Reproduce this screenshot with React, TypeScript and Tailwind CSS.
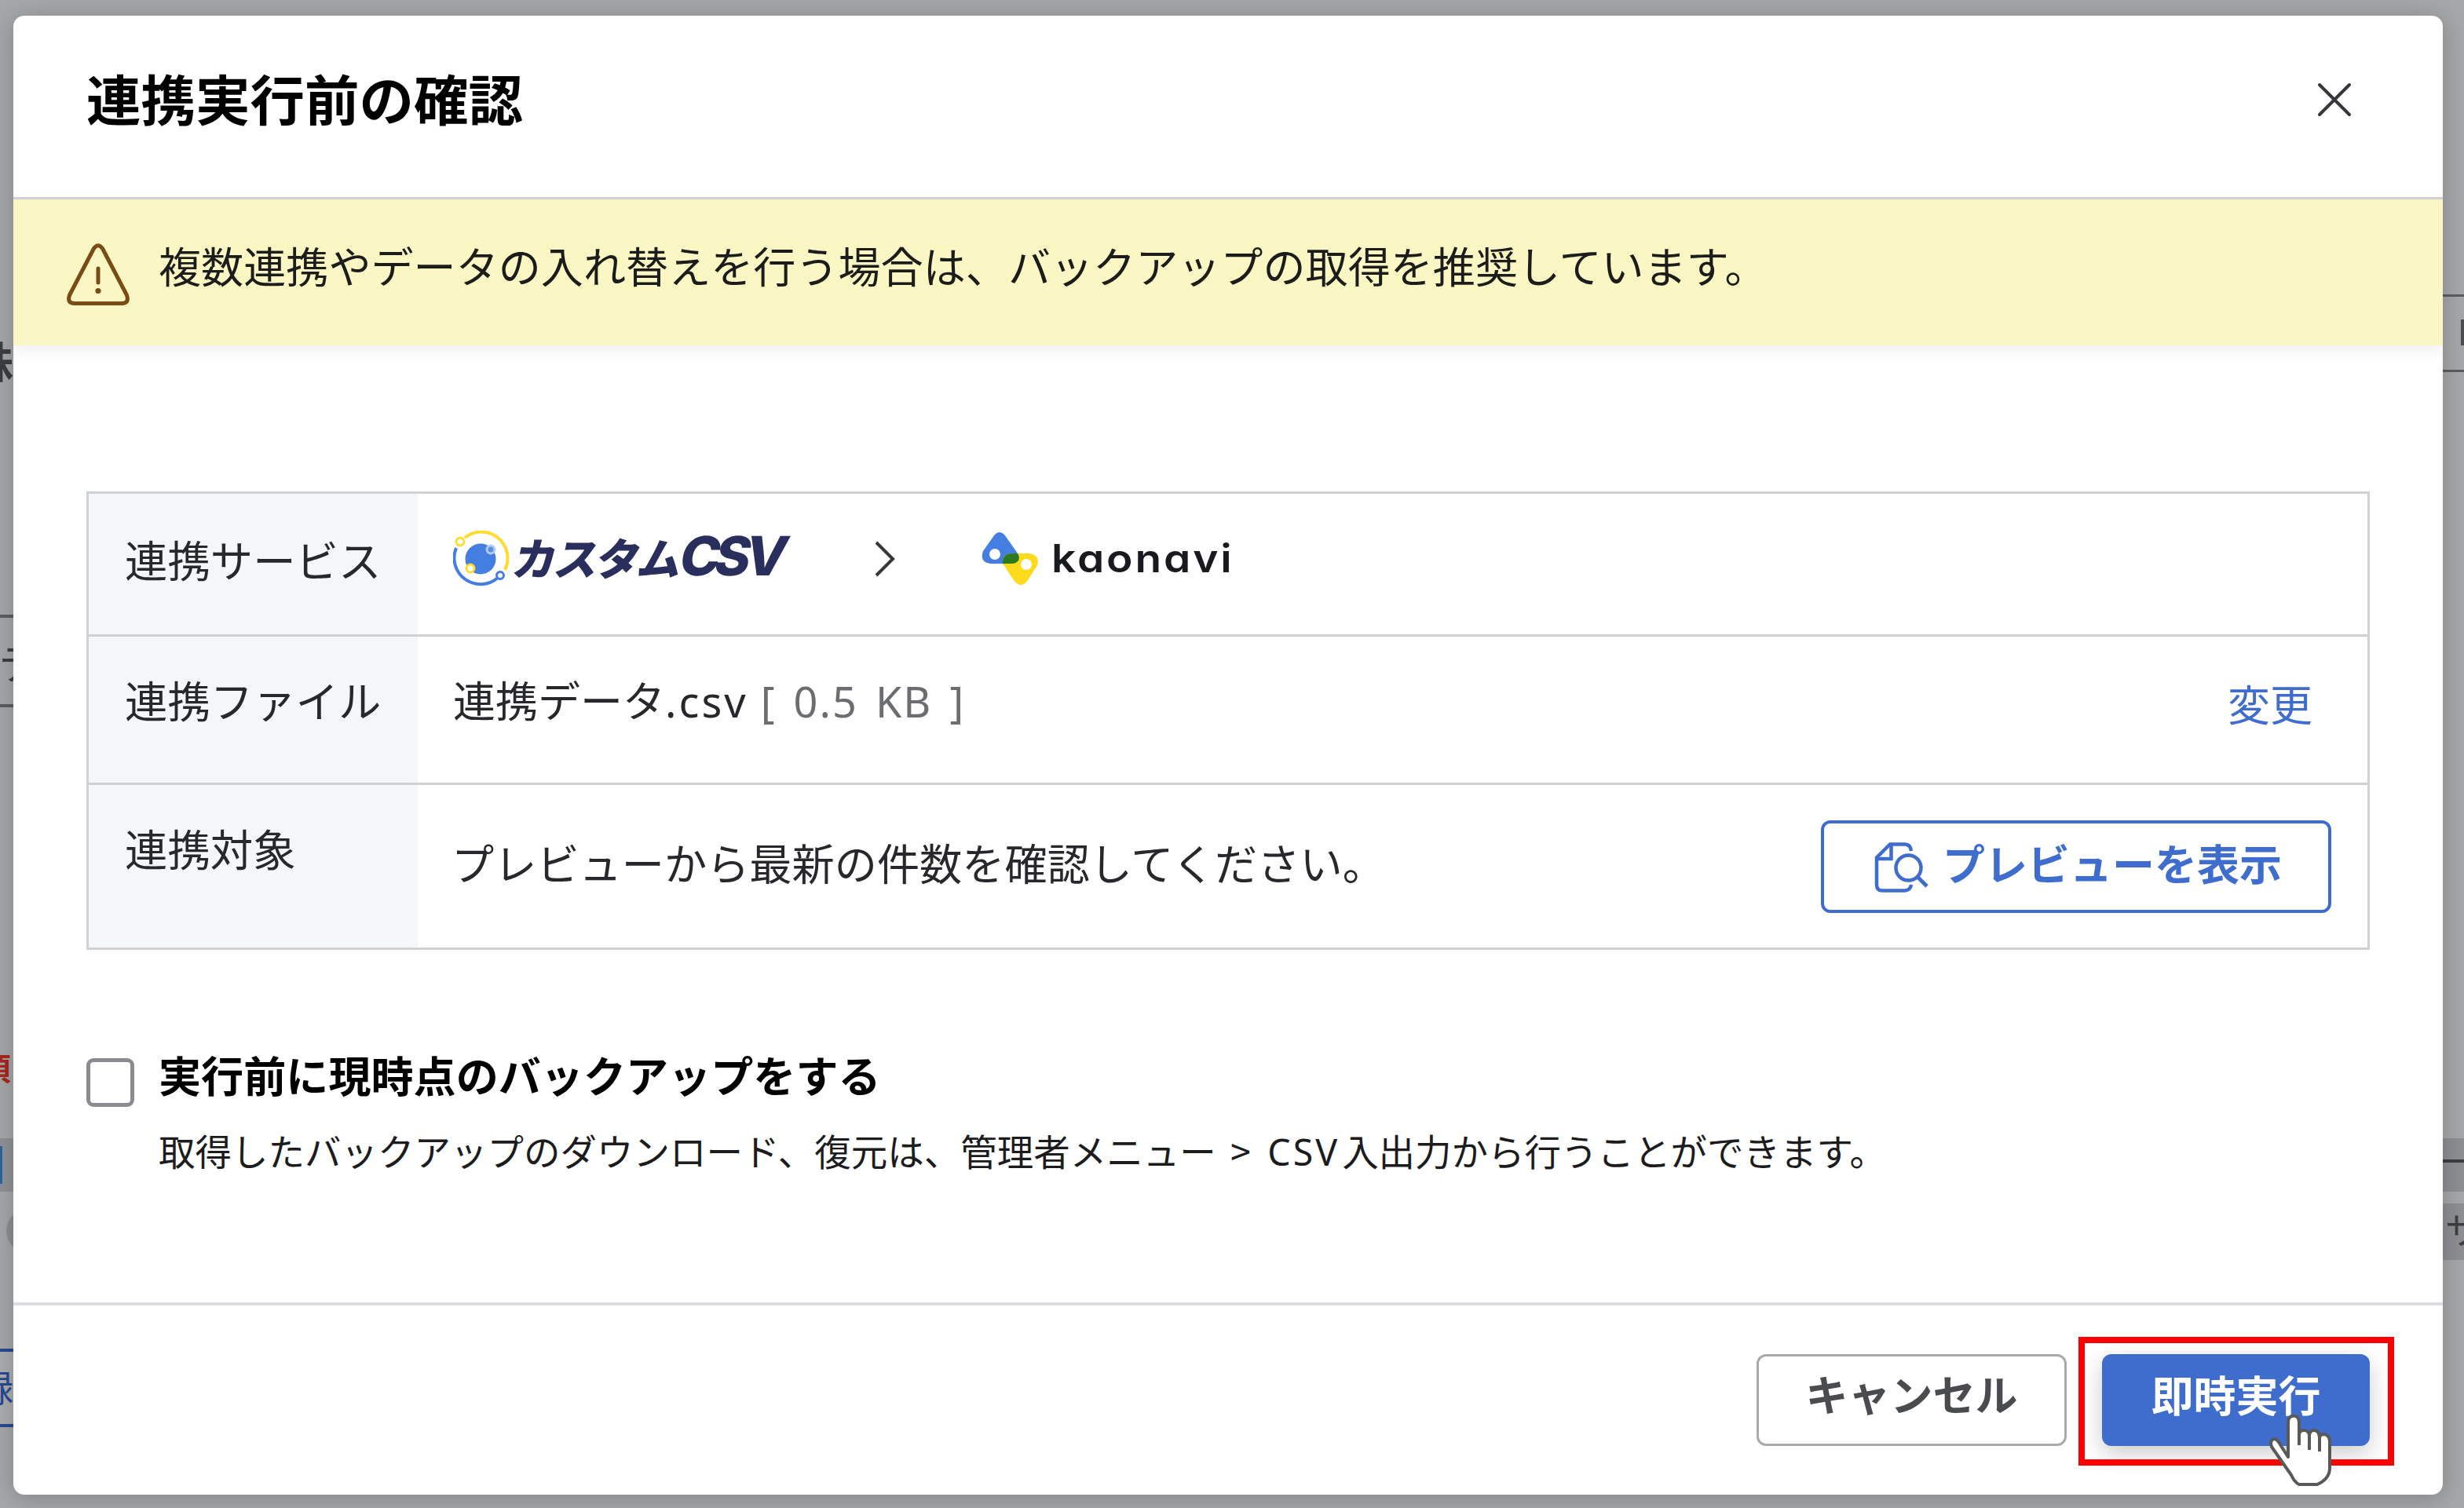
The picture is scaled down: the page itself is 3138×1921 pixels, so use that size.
import { clsx } from "clsx";
import type { ReactNode } from "react";

const WarningIcon = () => (
  <svg width="82" height="80" viewBox="0 0 82 80" fill="none" stroke="#7a4b14" strokeWidth="5" strokeLinecap="round">
    <path d="M35.5 6.500 Q41 -1 46.500 6.500 L77.500 66 Q81 76.500 71 76.500 H11 Q1 76.500 4.500 66 Z" strokeLinejoin="round" />
    <path d="M41 32 V50" />
    <circle cx="41" cy="60.500" r="3.600" fill="#7a4b14" stroke="none" />
  </svg>
);

const CloseIcon = () => (
  <svg width="46" height="46" viewBox="0 0 46 46" stroke="#36373a" strokeWidth="4" strokeLinecap="round">
    <path d="M4 4 L42 42 M42 4 L4 42" />
  </svg>
);

const PreviewIcon = () => (
  <svg width="70" height="68" viewBox="0 0 70 68" fill="none" stroke="#3f6dce" strokeWidth="4.500">
    <path d="M47 11 Q46 2.500 39 2.500 H20 L3 19.500 V54 Q3 61.500 10 61.500 H39 Q46 61 47 54" />
    <path d="M21.500 3 V21 H3" />
    <circle cx="43.500" cy="32.500" r="16" />
    <path d="M55 44 L67 56" strokeWidth="5" />
  </svg>
);

const CustomCsvMark = () => (
  <svg width="72" height="72" viewBox="0 0 72 72" fill="none">
    <path d="M15 9 A33.500 33.500 0 0 1 66 50" stroke="#ffdc2e" strokeWidth="4" />
    <path d="M4 22 A33.500 33.500 0 0 0 57 60" stroke="#447ee0" strokeWidth="4" />
    <circle cx="35" cy="36" r="19.500" fill="#447ee0" />
    <circle cx="9" cy="14" r="5" fill="#fff" stroke="#ffdc2e" strokeWidth="3" />
    <circle cx="60" cy="57" r="4.500" fill="#fff" stroke="#447ee0" strokeWidth="3" />
    <circle cx="48" cy="24" r="5" fill="#5b8fe6" stroke="#b4cdf6" strokeWidth="3" />
    <circle cx="22" cy="48" r="5" fill="#fff" stroke="#ffdc2e" strokeWidth="3" />
  </svg>
);

const KaonaviMark = () => (
  <svg width="74" height="70" viewBox="0 0 74 70">
    <path d="M14 8 Q23 -6 32 8 L46 28 Q52 40 38 41 H11 Q-3 39 2 25 Z" fill="#447ee0" />
    <path d="M38 28 H61 Q75 30 71 43 L59 62 Q50 74 41 62 L27 41 Q26 29 38 28 Z" fill="#ffd91c" />
    <path d="M27 41 Q26 29 38 28 H46 Q49.500 34 46.500 37.500 Q44 41 38 41 Z" fill="#2b7a1d" />
    <circle cx="17" cy="29" r="7" fill="#fff" />
    <circle cx="57" cy="42" r="7" fill="#fff" />
  </svg>
);

const HandCursor = () => (
  <svg className="absolute left-[2890px] top-[1801px]" width="80" height="93" viewBox="0 0 80 93">
    <path
      d="M24 55 V11 Q24 2.500 31 2.500 Q38 2.500 38 11 V26 Q39 21 44 21 Q50 21 51 27 Q52 21 57 21 Q63 21 64 30 Q65 26 70 26 Q77 27 77 36 V69 Q77 83 61 90 H38 Q32 87 28 78 L3 42 Q0 33 7 32 Q11 33 15 41 Z"
      fill="#fff"
      stroke="#595959"
      strokeWidth="4"
      strokeLinejoin="round"
    />
    <path d="M38 22 V40 M51 26 V46 M64 30 V48" stroke="#595959" strokeWidth="4" />
  </svg>
);

// Slivers of the page that stay visible round the dialog
const Backdrop = () => (
  <div className="absolute inset-0 overflow-hidden text-[54px] leading-none text-[#3d3e42]">
    <span className="absolute -left-[37px] top-[432px] font-bold">株</span>
    <div className="absolute left-0 top-[783px] h-[118px] w-5 border-y-4 border-[#5c5d60]" />
    <span className="absolute -left-[2px] top-[816px]">テ</span>
    <span className="absolute -left-[26px] top-[1339px] text-[40px] font-bold text-[#a8281c]">須</span>
    <div className="absolute left-0 top-[1450px] h-[68px] w-5 bg-[#919296]" />
    <div className="absolute left-0 top-[1460px] h-[48px] w-[3px] bg-[#2b66a0]" />
    <div className="absolute left-[8px] top-[1540px] h-[56px] w-[56px] rounded-full bg-[#8e8f93]" />
    <div className="absolute left-0 top-[1718px] h-[100px] w-5 border-y-4 border-[#274b94] bg-[#adaeaf]" />
    <span className="absolute -left-[29px] top-[1742px] text-[46px] text-[#274b94]">録</span>

    <div className="absolute left-[3105px] top-[375px] h-[99px] w-10 border-y-[3px] border-[#5c5d60]" />
    <div className="absolute left-[3134px] top-[407px] h-[33px] w-[4px] bg-[#4c4d50]" />
    <div className="absolute left-[3105px] top-[1450px] h-[68px] w-10 bg-[#8e8f93]" />
    <div className="absolute left-[3105px] top-[1477px] h-[4px] w-10 bg-[#3d3e42]" />
    <div className="absolute left-[3105px] top-[1533px] h-[72px] w-10 bg-[#8e8f93]" />
    <span className="absolute left-[3114px] top-[1541px] text-[46px]">サ</span>
  </div>
);

type RowProps = {
  label: string;
  className: string;
  labelClassName: string;
  children: ReactNode;
};

const Row = ({ label, className, labelClassName, children }: RowProps) => (
  <div className={clsx("flex border-[#d0d1d3]", className)}>
    <div className={clsx("w-[419px] shrink-0 bg-[#f5f6f9] pl-[46px] text-[54.400px]", labelClassName)}>{label}</div>
    <div className="flex flex-1 pl-[45px]">{children}</div>
  </div>
);

export default function App() {
  return (
    <div className="relative flex h-[1921px] w-[3138px] overflow-hidden bg-[#a6a7a9] pl-[17px] pt-5 font-['Noto_Sans_CJK_JP',sans-serif] text-[54px] leading-[80px] text-[#26282b]">
      <Backdrop />

      <div className="relative flex h-[1884px] w-[3094px] flex-col overflow-clip rounded-[14px] bg-white shadow-[0_4px_32px_rgba(0,0,0,0.22)]">
        <header className="flex h-[234px] items-start justify-between border-b-[3px] border-[#d3d4da] pl-[93px] pr-[115px]">
          <h1 className="mt-16 text-[69.500px] font-bold leading-[80px] text-black">連携実行前の確認</h1>
          <button className="mt-[84px]">
            <CloseIcon />
          </button>
        </header>

        <div className="flex h-[186px] items-start bg-[#fbf7c4] pl-[67px] text-[#1c1c1a] shadow-[0_4px_20px_rgba(0,0,0,0.08)]">
          <div className="mt-14">
            <WarningIcon />
          </div>
          <p className="ml-9 mt-11 text-[54.100px]">
            複数連携やデータの入れ替えを行う場合は、バックアップの取得を推奨しています。
          </p>
        </div>

        <main className="h-[1219px] px-[93px] pt-[186px]">
          <div className="border-[3px] border-[#d0d1d3]">
            <Row label="連携サービス" className="h-[182px] border-b-[3px]" labelClassName="pt-[43px]">
              <div className="flex h-full items-start">
                <div className="mt-[47px]">
                  <CustomCsvMark />
                </div>
                <span className="ml-[6px] mt-[40px] inline-block w-[352px] origin-left -skew-x-12 whitespace-nowrap text-[56px] font-black tracking-[-3px] text-[#2a2e5c]">
                  カスタム<span className="font-[Inter] text-[69px] font-extrabold leading-none tracking-[-7px]">CSV</span>
                </span>
                <svg className="ml-[106px] mt-[60px]" width="28" height="46" viewBox="0 0 28 46" fill="none" stroke="#36373a" strokeWidth="4">
                  <path d="M3 2 L24 23 L3 44" />
                </svg>
                <div className="ml-[109px] mt-[48px]">
                  <KaonaviMark />
                </div>
                <span className="ml-[15px] mt-[42px] origin-left scale-x-110 font-[Inter] text-[50px] font-semibold tracking-[2.600px] text-[#191a1e] [font-feature-settings:'cv11']">
                  kaonavi
                </span>
              </div>
            </Row>

            <Row label="連携ファイル" className="h-[189px] border-b-[3px]" labelClassName="pt-10">
              <div className="flex flex-1 items-start justify-between pr-[70px] pt-10">
                <p>
                  連携データ<span className="font-['Noto_Sans'] tracking-[3px]">.csv</span>{" "}
                  <span className="ml-1 font-['Noto_Sans'] tracking-[2px] text-[#6c6d70] [word-spacing:6px]">[ 0.5 KB ]</span>
                </p>
                <a className="mt-[5px] text-[#3f6dce]">変更</a>
              </div>
            </Row>

            <Row label="連携対象" className="h-[207px]" labelClassName="pt-10">
              <div className="flex flex-1 items-start justify-between pr-[46px]">
                <p className="-ml-[2px] mt-[58px] text-[54.200px]">プレビューから最新の件数を確認してください。</p>
                <button className="mt-[45px] flex h-[118px] w-[650px] items-start rounded-[12px] border-4 border-[#3f6dce] pl-[64px] pt-[10px] font-bold text-[#3f6dce]">
                  <span className="mt-[14px]">
                    <PreviewIcon />
                  </span>
                  <span className="ml-[17px]">プレビューを表示</span>
                </button>
              </div>
            </Row>
          </div>

          <label className="mt-[122px] flex items-start text-black">
            <span className="mt-4 h-[62px] w-[61px] shrink-0 rounded-[9px] border-[5px] border-[#8b8c90]" />
            <span className="-mt-[3px] ml-[31px]">
              <span className="block text-[54.100px] font-bold">実行前に現時点のバックアップをする</span>
              <span className="mt-4 block text-[46.500px] text-[#1c1c1e]">
                取得したバックアップのダウンロード、復元は、管理者メニュー{" "}
                <span className="ml-2 tracking-[2px]">
                  &gt; <span className="ml-[7px] mr-[3px] font-['Noto_Sans'] tracking-[3px]">CSV</span>
                </span>
                入出力から行うことができます。
              </span>
            </span>
          </label>
        </main>

        <footer className="flex flex-1 items-start justify-end gap-[45px] border-t-[4px] border-[#dcdde2] pr-[93px] pt-[62px] font-bold">
          <button className="flex h-[117px] w-[395px] justify-center rounded-[12px] border-[3.500px] border-[#a9aaac] pt-[7px] text-[#4a4b4e]">
            キャンセル
          </button>
          <button className="flex h-[117px] w-[341px] justify-center rounded-[12px] bg-[#3f6dce] pt-[11px] text-white shadow-[0_10px_30px_rgba(0,0,0,0.2)]">
            即時実行
          </button>
        </footer>
      </div>

      <div className="absolute left-[2647px] top-[1703px] h-[164px] w-[402px] border-8 border-[#ff0000]" />
      <HandCursor />
    </div>
  );
}
